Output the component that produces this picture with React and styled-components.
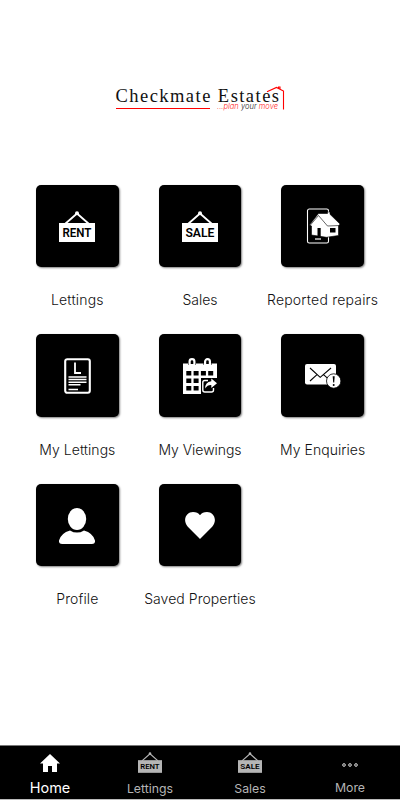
import React from "react";
import styled, { createGlobalStyle } from "styled-components";

const TILES = [
  { name: "Lettings", icon: <SignIcon text="RENT" />, spacing: 0.2 },
  { name: "Sales", icon: <SignIcon text="SALE" />, spacing: 0 },
  { name: "Reported repairs", icon: <RepairIcon />, spacing: 0.2 },
  { name: "My Lettings", icon: <DocumentIcon />, spacing: 0.05 },
  { name: "My Viewings", icon: <CalendarIcon />, spacing: -0.05 },
  { name: "My Enquiries", icon: <MailIcon />, spacing: 0.05 },
  { name: "Profile", icon: <ProfileIcon />, spacing: 0.1 },
  { name: "Saved Properties", icon: <HeartIcon />, spacing: 0.05 }
];

const TABS = [
  { name: "Home", icon: <HomeIcon />, active: true, lift: 1 },
  { name: "Lettings", icon: <SignIcon text="RENT" small />, low: true, lift: 2 },
  { name: "Sales", icon: <SignIcon text="SALE" small />, low: true, lift: 2 },
  { name: "More", icon: <MoreIcon />, lift: -1 }
];

const App = () => {
  return (
    <Screen>
      <GlobalStyle />
      <Header>
        <Logo />
      </Header>
      <Grid>
        {TILES.map(tile => (
          <Item key={tile.name}>
            <Tile>{tile.icon}</Tile>
            <Label $spacing={tile.spacing}>{tile.name}</Label>
          </Item>
        ))}
      </Grid>
      <TabBar>
        {TABS.map(tab => (
          <Tab key={tab.name} $active={tab.active}>
            <TabIcon $lift={tab.lift}>{tab.icon}</TabIcon>
            <TabLabel $active={tab.active} $low={tab.low}>
              {tab.name}
            </TabLabel>
          </Tab>
        ))}
      </TabBar>
    </Screen>
  );
};

function Logo() {
  return (
    <svg width="170" height="28" viewBox="0 0 170 28">
      <text
        x="0.5"
        y="18"
        fontFamily="'Liberation Serif', serif"
        fontSize="18.5"
        textLength="163.5"
        fill="#111"
      >
        Checkmate Estates
      </text>
      <path d="M1 24.5h94" stroke="#ff0000" strokeWidth="1.2" />
      <path
        d="M152 7.8L161.5 3.4l7 3.6v18.5M163.5 4.5V3h1.5v2"
        fill="none"
        stroke="#ff0000"
        strokeWidth="1.1"
      />
      <text
        x="102"
        y="25.2"
        fontFamily="Inter, sans-serif"
        fontSize="7.5"
        fontStyle="italic"
        fontWeight="300"
        textLength="61"
        fill="#ff2020"
      >
        ...plan <tspan fill="#111">your</tspan> move
      </text>
    </svg>
  );
}

function SignIcon({ text, small }) {
  return (
    <svg
      width={small ? 24 : 36}
      height={small ? 21 : 31}
      viewBox="0 0 36 31"
      fill="currentColor"
    >
      <path
        d="M6 13L18 2.5 30 13"
        fill="none"
        stroke="currentColor"
        strokeWidth="1.8"
      />
      <circle cx="18" cy="2.2" r="2" />
      <path d="M0 12h36v19H0z" />
      <text
        x="3.4"
        y="26"
        fontFamily="Roboto, sans-serif"
        fontWeight="600"
        fontSize="12"
        textLength="29"
        lengthAdjust="spacingAndGlyphs"
        fill="#000"
      >
        {text}
      </text>
    </svg>
  );
}

function RepairIcon() {
  return (
    <svg width="35" height="36" viewBox="0 0 35 36">
      <rect
        x="2.5"
        y="1"
        width="21"
        height="34"
        rx="1.8"
        fill="none"
        stroke="#fff"
        strokeWidth="1.1"
      />
      <path d="M10 31h6" stroke="#fff" strokeWidth="1.2" />
      <path
        d="M4.5 17L13.5 5.5h9V4H25v2.3L35 16l-1.5 2v9.5l-12 1.8L6.5 27V18z"
        fill="#fff"
        stroke="#000"
        strokeWidth="0.6"
      />
      <path d="M5 17.5l8.5-10 9 10.5 12-.5" fill="none" stroke="#000" strokeWidth="0.6" />
      <path d="M12.5 20h3.2v9l-3.2-.6zM25 20h5.5v4.5H25z" fill="#000" />
    </svg>
  );
}

function DocumentIcon() {
  return (
    <svg width="27" height="36" viewBox="0 0 27 36" fill="none" stroke="#fff">
      <rect x="1.2" y="1.2" width="24.6" height="33.6" rx="2" strokeWidth="2.1" />
      <path d="M11 4.5V15h6" strokeWidth="1.8" />
      <path
        d="M4.5 19h18M4.5 21.6h18M4.5 24.2h18M4.5 26.8h12M4.5 31.5h9.5"
        strokeWidth="1.5"
      />
    </svg>
  );
}

function CalendarIcon() {
  return (
    <svg width="34" height="36" viewBox="0 0 34 36">
      <path d="M0 5.5h34V20H18v16H0z" fill="#fff" />
      {[9, 24.5].map(x => (
        <g key={x}>
          <path d={`M${x - 4} 5h8v3h-8z`} fill="#000" />
          <path
            d={`M${x - 2.4} 7V3.6a2.4 2.4 0 0 1 4.8 0V7z`}
            fill="#000"
            stroke="#fff"
            strokeWidth="2.2"
          />
          <path d={`M${x - 5} 7h10v3h-10z`} fill="#fff" />
        </g>
      ))}
      <path
        d="M3.3 13h5v4.5h-5zM10.6 13h5v4.5h-5zM17.9 13h5v4.5h-5zM25.2 13h5v4.5h-5zM3.3 20.5h5V25h-5zM10.6 20.5h5V25h-5zM3.3 28h5v4.5h-5zM10.6 28h5v4.5h-5z"
        fill="#000"
      />
      <path
        d="M25 22.5h-3.2q-2 0-2 2V32q0 2 2 2h6.7q2 0 2-2v-2"
        fill="none"
        stroke="#fff"
        strokeWidth="1.4"
      />
      <path
        d="M28.3 20.5l5.7 4.8-5.7 4.8v-3q-4-.2-6 3.4-.3-6.5 6-7.2z"
        fill="#fff"
      />
    </svg>
  );
}

function MailIcon() {
  return (
    <svg width="36" height="26" viewBox="0 0 36 26">
      <rect y="1" width="31" height="20.5" rx="2" fill="#fff" />
      <path
        d="M5 5l10.2 9.3L26 5M5 18l7-6.3M18.5 11.7l4.5 4"
        fill="none"
        stroke="#000"
        strokeWidth="1.1"
      />
      <circle cx="28.7" cy="18" r="7.2" fill="#fff" stroke="#000" strokeWidth="0.8" />
      <path d="M27.7 13.2h2l-.5 6.2h-1z" />
      <circle cx="28.7" cy="21.9" r="1" />
    </svg>
  );
}

function ProfileIcon() {
  return (
    <svg width="36" height="36" viewBox="0 0 36 36" fill="#fff">
      <ellipse cx="18" cy="11" rx="9.2" ry="11" />
      <path d="M11 22.4q7 4.4 14 0 9 2.6 11 10 .5 3.6-3 3.6H3q-3.5 0-3-3.6 2-7.4 11-10z" />
    </svg>
  );
}

function HeartIcon() {
  return (
    <svg width="30" height="27" viewBox="0 0 30 27" fill="#fff">
      <path d="M15 27L2.8 14.8C-3.2 7.5 1.8 0 8 0q4.7 0 7 3.3Q17.3 0 22 0c6.200 0 11.200 7.500 5.200 14.800z" />
    </svg>
  );
}

function HomeIcon() {
  return (
    <svg width="20" height="18" viewBox="0 0 20 18" fill="#fff">
      <path d="M10 0l10 9.500h-3V18h-5v-6H8v6H3V9.500H0z" />
    </svg>
  );
}

function MoreIcon() {
  return (
    <svg width="16" height="4" viewBox="0 0 16 4" fill="#444" stroke="#bbb">
      <circle cx="2" cy="2" r="1.4" />
      <circle cx="8" cy="2" r="1.4" />
      <circle cx="14" cy="2" r="1.4" />
    </svg>
  );
}

const GlobalStyle = createGlobalStyle`
  body {
    margin: 0;
    background: #fff;
  }
`;

const Screen = styled.div`
  display: flex;
  flex-direction: column;
  box-sizing: border-box;
  width: 400px;
  height: 800px;
  overflow: hidden;
  font-family: Inter, "Open Sans", sans-serif;
  border-bottom: 1px solid #bbb;
`;

const Header = styled.header`
  display: flex;
  justify-content: center;
  box-sizing: border-box;
  height: 184px;
  padding-top: 84px;
`;

const Grid = styled.main`
  display: grid;
  grid-template-columns: repeat(3, 1fr);
  grid-auto-rows: 149.7px;
  flex: 1;
  padding: 0.6px 16px 0;
`;

const Item = styled.div`
  display: flex;
  flex-direction: column;
  align-items: center;
`;

const Tile = styled.div`
  display: flex;
  align-items: center;
  justify-content: center;
  box-sizing: border-box;
  width: 82.5px;
  height: 82.5px;
  padding-top: 1px;
  border-radius: 5px;
  background: #000;
  color: #fff;
  box-shadow: 1px 1px 2px rgba(0, 0, 0, 0.5);
`;

const Label = styled.div`
  margin-top: 23px;
  font-size: 14px;
  font-weight: 300;
  line-height: 20px;
  letter-spacing: ${props => props.$spacing}px;
  white-space: nowrap;
  color: #111;
`;

const TabBar = styled.nav`
  display: flex;
  box-sizing: border-box;
  height: 54px;
  border-top: 1px solid #777;
  background: #000;
`;

const Tab = styled.div`
  display: flex;
  flex: 1;
  flex-direction: column;
  align-items: center;
  color: ${props => (props.$active ? "#fff" : "#b5b5b5")};
`;

const TabIcon = styled.div`
  display: flex;
  align-items: center;
  box-sizing: border-box;
  height: 36px;
  padding-top: ${props => Math.max(0, -props.$lift * 2)}px;
  padding-bottom: ${props => Math.max(0, props.$lift * 2)}px;
`;

const TabLabel = styled.div`
  font-size: ${props => (props.$active ? 14.5 : 12.3)}px;
  line-height: 14px;
  margin-top: ${props => (props.$low ? 0 : -1)}px;
`;

export default App;
